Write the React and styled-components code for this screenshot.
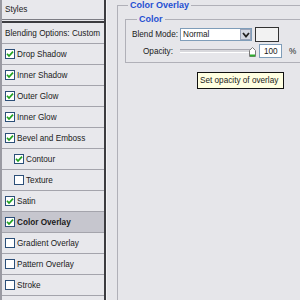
import React from "react";
import styled, { createGlobalStyle } from "styled-components";

const GlobalStyle = createGlobalStyle`
  body {
    margin: 0;
    background: #e6e6ea;
    font-family: "Liberation Sans", Arial, sans-serif;
  }
`;

const styleItems = [
  { label: "Drop Shadow", checked: true },
  { label: "Inner Shadow", checked: true },
  { label: "Outer Glow", checked: true },
  { label: "Inner Glow", checked: true },
  { label: "Bevel and Emboss", checked: true },
  { label: "Contour", checked: true, sub: true },
  { label: "Texture", checked: false, sub: true },
  { label: "Satin", checked: true },
  { label: "Color Overlay", checked: true, active: true },
  { label: "Gradient Overlay", checked: false },
  { label: "Pattern Overlay", checked: false },
  { label: "Stroke", checked: false },
];

const CheckBox = ({ checked }) => (
  <Box>
    {checked && (
      <svg width="8" height="8" viewBox="0 0 8 8">
        <path d="M1 3.8 L3 6 L7 1.6" stroke="#21a121" strokeWidth="1.7" fill="none" />
      </svg>
    )}
  </Box>
);

const App = () => {
  return (
    <Window>
      <GlobalStyle />
      <Sidebar>
        <Header>Styles</Header>
        <ThickRule />
        <Row>Blending Options: Custom</Row>
        {styleItems.map((item) => (
          <Row key={item.label} $sub={item.sub} $active={item.active}>
            <CheckBox checked={item.checked} />
            {item.label}
          </Row>
        ))}
        <Row />
      </Sidebar>
      <Content>
        <Group>
          <Legend $offset={3}>Color Overlay</Legend>
          <SubGroup>
            <Legend $offset={5}>Color</Legend>
            <FormGrid>
              <Label>Blend Mode:</Label>
              <Control>
                <Select>
                  <SelectText>Normal</SelectText>
                  <DropButton>
                    <svg width="8" height="6" viewBox="0 0 8 6">
                      <path d="M1 1 L4 4.5 L7 1" stroke="#222" strokeWidth="1.8" fill="none" />
                    </svg>
                  </DropButton>
                </Select>
                <Swatch />
              </Control>
              <Label $pad>Opacity:</Label>
              <Control>
                <Slider>
                  <Track />
                  <Thumb>
                    <svg width="7" height="10" viewBox="0 0 7 10">
                      <path d="M0.5 3.5 L3.5 0.5 L6.5 3.5 V9.5 H0.5 Z" fill="#fff" stroke="#7a7a7a" />
                      <rect x="1" y="7.5" width="5" height="2" fill="#2fae2f" />
                    </svg>
                  </Thumb>
                </Slider>
                <NumberBox>100</NumberBox>
                <Unit>%</Unit>
              </Control>
            </FormGrid>
          </SubGroup>
        </Group>
      </Content>
      <Tooltip>Set opacity of overlay</Tooltip>
    </Window>
  );
};

export default App;

const Window = styled.div`
  position: relative;
  display: flex;
  width: 300px;
  height: 300px;
  overflow: hidden;
  font-size: 8.2px;
  color: #1a1a1a;
`;

const Sidebar = styled.div`
  width: 102px;
  flex-shrink: 0;
  background: #e8e8ec;
  border-left: 2px solid #9a9aa2;
  border-right: 2px solid #3c3c40;
`;

const Header = styled.div`
  height: 19px;
  display: flex;
  align-items: center;
  padding-left: 3px;
  border-bottom: 1px solid #7c7c84;
`;

const ThickRule = styled.div`
  height: 2px;
  margin-top: 1px;
  background: #3c3c40;
`;

const Row = styled.div`
  height: 20px;
  display: flex;
  align-items: center;
  gap: 2px;
  padding-left: ${(p) => (p.$sub ? "12px" : "3px")};
  border-bottom: 1px solid #a4a4ac;
  background: ${(p) => (p.$active ? "#c6c6ce" : "transparent")};
  font-weight: ${(p) => (p.$active ? "bold" : "normal")};
  white-space: nowrap;
  overflow: hidden;
`;

const Box = styled.span`
  width: 10px;
  height: 10px;
  box-sizing: border-box;
  border: 1px solid #2c4f78;
  background: #fff;
  display: flex;
  align-items: center;
  justify-content: center;
  flex-shrink: 0;
`;

const Content = styled.div`
  flex: 1;
  padding-left: 10px;
  border-left: 1px solid #f4f4f6;
`;

const Group = styled.fieldset`
  margin: 0;
  padding: 0 0 0 7px;
  width: 240px;
  height: 320px;
  border: 1px solid #b0b0b8;
  border-right: none;
`;

const Legend = styled.legend`
  padding: 0 2px;
  margin-left: ${(p) => p.$offset}px;
  font-weight: bold;
  color: #1f4fd2;
  font-size: 9px;
  line-height: 11px;
`;

const SubGroup = styled.fieldset`
  margin: 3px 0 0;
  padding: 2px 0 4px 6px;
  width: 220px;
  border: 1px solid #b0b0b8;
  border-right: none;
`;

const FormGrid = styled.div`
  display: grid;
  grid-template-columns: 45px auto;
  column-gap: 3px;
  row-gap: 2px;
  align-items: center;
`;

const Label = styled.div`
  text-align: right;
  padding-right: ${(p) => (p.$pad ? "4px" : "0")};
  white-space: nowrap;
`;

const Control = styled.div`
  display: flex;
  align-items: center;
  gap: 3px;
`;

const Select = styled.div`
  width: 72px;
  height: 13px;
  box-sizing: border-box;
  border: 1px solid #7f9db9;
  background: #fff;
  display: flex;
  align-items: center;
  justify-content: space-between;
`;

const SelectText = styled.span`
  padding-left: 2px;
`;

const DropButton = styled.span`
  width: 11px;
  height: 11px;
  box-sizing: border-box;
  border: 1px solid #9aa4b8;
  background: #d4d8e2;
  display: flex;
  align-items: center;
  justify-content: center;
`;

const Swatch = styled.div`
  width: 24px;
  height: 15px;
  box-sizing: border-box;
  border: 1px solid #333;
  background: #f2f2f2;
`;

const Slider = styled.div`
  position: relative;
  width: 76px;
  height: 14px;
  display: flex;
  align-items: center;
`;

const Track = styled.div`
  width: 73px;
  height: 2px;
  background: #d8d8dc;
  border-top: 1px solid #a8a8b0;
  border-bottom: 1px solid #fff;
`;

const Thumb = styled.div`
  position: absolute;
  right: 0;
  top: 3px;
  display: flex;
`;

const NumberBox = styled.div`
  width: 23px;
  height: 14px;
  box-sizing: border-box;
  border: 1px solid #7f9db9;
  background: #fff;
  padding-left: 4px;
  display: flex;
  align-items: center;
`;

const Unit = styled.span`
  margin-left: 4px;
`;

const Tooltip = styled.div`
  position: absolute;
  left: 197px;
  top: 72px;
  width: 87px;
  height: 17px;
  box-sizing: border-box;
  border: 1px solid #111;
  background: #ffffe1;
  padding-left: 2px;
  display: flex;
  align-items: center;
  white-space: nowrap;
`;
